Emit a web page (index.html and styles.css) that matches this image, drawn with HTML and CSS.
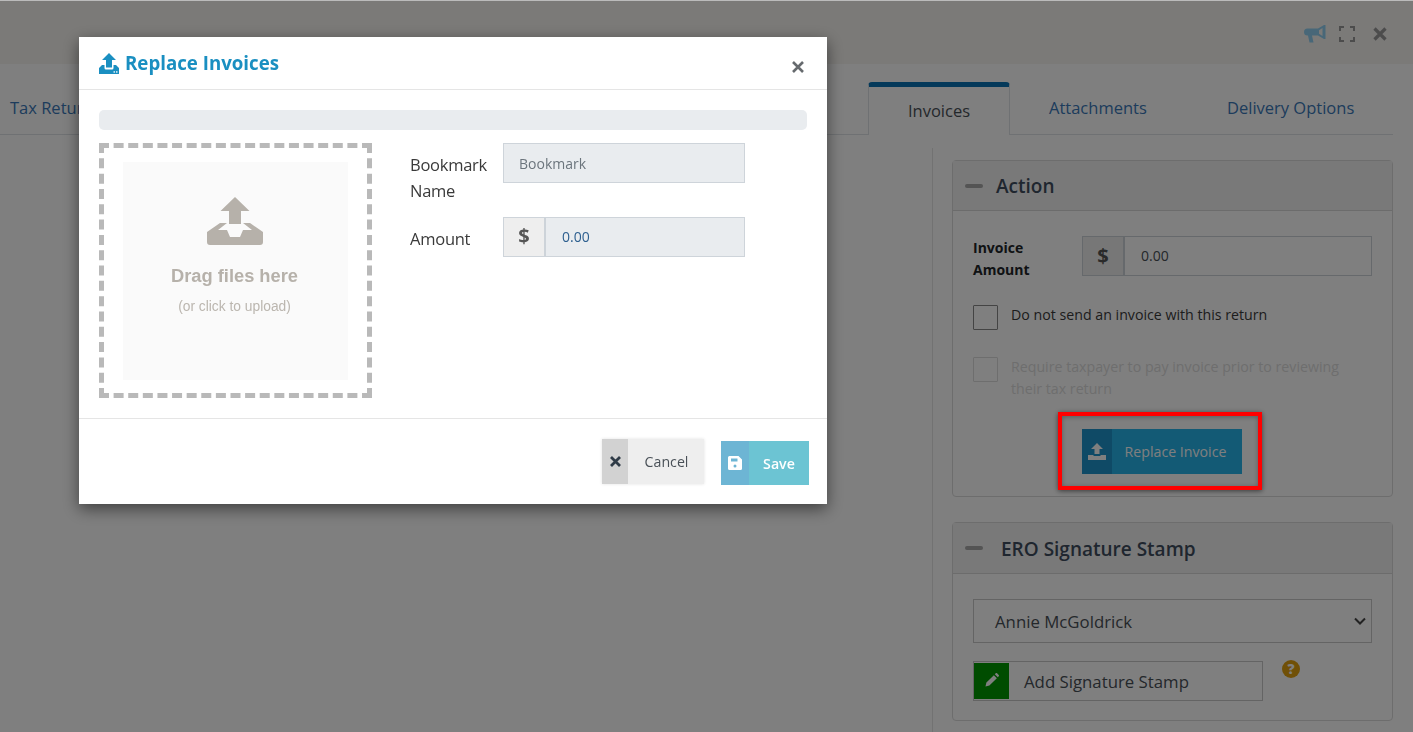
FILE: index.html
```html
<!DOCTYPE html>
<html lang="en">
<head>
<meta charset="utf-8">
<title>Replace Invoices</title>
<link rel="stylesheet" href="styles.css">
</head>
<body>
<div class="page">
  <header class="topbar">
    <svg class="tb-icon" width="22" height="18" viewBox="0 0 22 18"><path fill="#90cff0" d="M20 0h1.500v14H20L14 10.500H8L9.500 17.500H5.500L4 10.500H3.500A3.500 3.500 0 0 1 3.500 3.500H14zM18.500 3L15 5.200v3.600L18.500 11z"/></svg>
    <svg class="tb-icon tb-expand" width="16" height="16" viewBox="0 0 16 16"><path fill="none" stroke="#999" stroke-width="2" d="M1 5V1h4M11 1h4v4M15 11v4h-4M5 15H1v-4"/></svg>
    <svg class="tb-icon" width="14" height="14" viewBox="0 0 14 14"><path stroke="#999" stroke-width="3.200" d="M1.500 1.500l11 11M12.500 1.500l-11 11"/></svg>
  </header>
  <nav class="tabs">
    <a class="tab tab-first">Tax Returns</a>
    <a class="tab tab-active">Invoices</a>
    <a class="tab tab-attach">Attachments</a>
    <a class="tab tab-delivery">Delivery Options</a>
  </nav>
  <div class="content">
    <aside class="side">
      <section class="panel panel-action">
        <div class="panel-head"><span class="minus"></span><span class="panel-title">Action</span></div>
        <div class="panel-body">
          <div class="amount-row">
            <label class="amount-label">Invoice Amount</label>
            <div class="inp-group side-group"><span class="addon">$</span><span class="inp-val">0.00</span></div>
          </div>
          <div class="check-row"><span class="box"></span><span class="check-text">Do not send an invoice with this return</span></div>
          <div class="check-row check-off"><span class="box"></span><span class="check-text check-long">Require taxpayer to pay invoice prior to reviewing their tax return</span></div>
          <div class="replace-wrap">
            <a class="replace-btn">
              <span class="replace-ico"><svg width="18" height="17" viewBox="0 0 18 17"><path fill="#fff" d="M9 0l6 6h-3.500v5h-5V6H3zM0 12h5.500v1h7v-1H18v5H0z"/></svg></span>
              <span class="replace-txt">Replace Invoice</span>
            </a>
          </div>
        </div>
      </section>
      <section class="panel panel-ero">
        <div class="panel-head ero-head"><span class="minus"></span><span class="panel-title ero-title">ERO Signature Stamp</span></div>
        <div class="panel-body">
          <div class="select-box"><span>Annie McGoldrick</span><svg width="12" height="8" viewBox="0 0 12 8"><path fill="none" stroke="#444" stroke-width="2" d="M1 1.500l5 5 5-5"/></svg></div>
          <div class="stamp-row">
            <a class="stamp-btn">
              <span class="stamp-ico"><svg width="14" height="14" viewBox="0 0 15 15"><path fill="#fff" d="M0.500 14.500l1-4.200L9.500 2.300l3.200 3.200-8 8zM10.500 1.300l1-1a1 1 0 0 1 1.400 0l1.800 1.800a1 1 0 0 1 0 1.400l-1 1z"/></svg></span>
              <span class="stamp-txt">Add Signature Stamp</span>
            </a>
            <span class="help">?</span>
          </div>
        </div>
      </section>
    </aside>
  </div>
</div>

<div class="backdrop"></div>
<div class="red-box"></div>

<div class="modal">
  <div class="modal-head">
    <svg width="20" height="21" viewBox="0 0 20 21"><path fill="#1a8fc1" d="M11 0l7 7h-4v7.500H8V7H4z" transform="translate(-1 0)"/><path fill="#1a8fc1" d="M0 21V15L3 12H5.500V15Q5.500 16.500 7 16.500H13Q14.500 16.500 14.500 15V12H17L20 15V21Z"/><rect x="14.500" y="18.300" width="1.500" height="1.300" fill="#fff"/><rect x="17" y="18.300" width="1.500" height="1.300" fill="#fff"/></svg>
    <h2 class="modal-title">Replace Invoices</h2>
    <svg class="modal-close" width="12" height="12" viewBox="0 0 12 12"><path stroke="#666a6e" stroke-width="2.600" d="M1 1l10 10M11 1L1 11"/></svg>
  </div>
  <div class="modal-body">
    <div class="progress"></div>
    <div class="form-area">
      <div class="drop">
        <div class="drop-inner">
          <svg class="drop-ico" width="56" height="48" viewBox="0 0 56 48"><path fill="#b6b1aa" d="M28 0L42.500 14H34V27H22V14H13.500ZM13 26H20L11 33H20L23 40H33L36 33H45L36 26H43L56 35V45A3 3 0 0 1 53 48H3A3 3 0 0 1 0 45V35Z"/></svg>
          <div class="drop-main">Drag files here</div>
          <div class="drop-sub">(or click to upload)</div>
        </div>
      </div>
      <div class="fields">
        <div class="field">
          <label class="field-label">Bookmark Name</label>
          <div class="fake-input placeholder">Bookmark</div>
        </div>
        <div class="field field-amount">
          <label class="field-label">Amount</label>
          <div class="inp-group modal-group"><span class="addon addon-modal">$</span><span class="inp-val modal-val">0.00</span></div>
        </div>
      </div>
    </div>
  </div>
  <div class="modal-foot">
    <a class="btn btn-cancel"><span class="btn-ico cancel-ico"><svg width="11" height="11" viewBox="0 0 11 11"><path stroke="#2f3b47" stroke-width="2.800" d="M1 1l9 9M10 1l-9 9"/></svg></span><span class="btn-txt">Cancel</span></a>
    <a class="btn btn-save"><span class="btn-ico save-ico"><svg width="14" height="14" viewBox="0 0 14 14"><path fill="#fff" fill-rule="evenodd" d="M1.500 0H10.500L14 3.500V12.500A1.500 1.500 0 0 1 12.500 14H1.500A1.500 1.500 0 0 1 0 12.500V1.500A1.500 1.500 0 0 1 1.500 0zM3 2.500V5.500H9.500V2.500zM7 8.500a1.500 1.500 0 1 0 0 3 1.500 1.500 0 0 0 0-3z"/></svg></span><span class="btn-txt">Save</span></a>
  </div>
</div>
</body>
</html>
```
FILE: styles.css
```css
* { box-sizing: border-box; }
html, body { margin: 0; height: 100%; overflow: hidden; }
body { font-family: "Open Sans", "Noto Sans", sans-serif; color: #212529; background: #fff; }
.page { height: 732px; overflow: hidden; }
.topbar { height: 64px; background: #f6f4f0; display: flex; align-items: center; justify-content: flex-end; gap: 13px; padding-right: 26px; padding-top: 2px; border-top: 1px solid #bbb; }
.tb-icon { display: block; }
.tb-expand { margin-right: 5px; }
.tabs { height: 71px; margin-right: 20px; border-bottom: 1px solid #dee2e6; position: relative; font-size: 16.500px; }
.tab { color: #3a78b8; display: block; }
.tab-first { position: absolute; left: 10px; top: 32px; }
.tab-active { position: absolute; left: 868px; top: 18px; width: 142px; height: 53px; background: #fff; border: 1px solid #dee2e6; border-top: 5px solid #0973b4; border-bottom: 0; border-radius: 4px 4px 0 0; color: #495057; text-align: center; padding-top: 12px; }
.tab-attach { position: absolute; left: 1049px; top: 32px; }
.tab-delivery { position: absolute; left: 1227px; top: 32px; }
.content { display: flex; justify-content: flex-end; padding-top: 13px; }
.side { width: 481px; border-left: 1px solid #e4e4e4; padding: 12px 20px 0 19px; height: 600px; }
.panel { border: 1px solid #dadada; border-radius: 4px; background: #fff; }
.panel-action { height: 337px; }
.panel-ero { margin-top: 25px; height: 199px; }
.panel-head { height: 50px; background: #f2f2f2; border-bottom: 1px solid #d8d8d8; display: flex; align-items: center; padding-left: 12px; }
.ero-head { height: 51px; }
.minus { width: 18px; height: 4px; border-radius: 2px; background: #a8a8a8; display: block; margin-right: 13px; }
.panel-title { font-size: 19px; font-weight: 600; color: #3f4d5e; }
.ero-title { margin: 1px 0 0 5px; }
.panel-body { padding: 25px 20px 0; }
.amount-row { display: flex; align-items: flex-start; }
.amount-label { width: 109px; font-size: 14px; font-weight: 700; line-height: 22px; padding-top: 1px; }
.inp-group { display: flex; border: 1px solid #cdd3d9; height: 40px; }
.side-group { width: 290px; background: #fff; }
.addon { width: 42px; background: #eee; border-right: 2px solid #cdd3d9; display: flex; align-items: center; justify-content: center; font-weight: 700; font-size: 20px; color: #555; flex: none; padding-bottom: 2px; }
.inp-val { font-size: 14px; line-height: 38px; padding-left: 16px; color: #495057; }
.check-row { display: flex; font-size: 14.200px; line-height: 22px; gap: 13px; color: #3a3a3a; }
.amount-row + .check-row { margin-top: 24px; }
.check-off { margin-top: 27px; color: #dcdcdc; }
.check-text { margin-top: -1px; }
.check-long { max-width: 340px; }
.box { width: 25px; height: 25px; border: 1px solid #888; flex: none; border-radius: 1px; }
.check-off .box { border-color: #dcdcdc; }
.replace-wrap { display: flex; justify-content: center; padding: 29px 22px 0 0; }
.replace-btn { width: 160px; height: 45px; display: flex; background: #26b4ea; color: #fff; font-size: 14.200px; }
.replace-ico { width: 30px; background: #1e94cc; display: flex; align-items: center; justify-content: center; }
.replace-txt { flex: 1; text-align: center; line-height: 45px; padding-right: 2px; }
.select-box { height: 44px; border: 1px solid #c8c8c8; display: flex; align-items: center; justify-content: space-between; padding: 0 5px 0 21px; font-size: 16.800px; color: #495057; }
.stamp-row { display: flex; margin-top: 18px; }
.stamp-btn { width: 290px; height: 40px; border: 1px solid #c8c8c8; display: flex; font-size: 16.800px; color: #495057; }
.stamp-ico { width: 35px; margin: 1px 0; background: #009900; display: flex; align-items: center; justify-content: center; padding-bottom: 3px; }
.stamp-txt { margin-left: 15px; line-height: 40px; }
.help { width: 18px; height: 18px; border-radius: 50%; background: #e1a10f; color: #fff; margin: -1px 0 0 19px; font-size: 14px; font-weight: 800; text-align: center; line-height: 18px; }

.backdrop { position: fixed; inset: 1px 0 0; background: rgba(0,0,0,.5); z-index: 10; }
.red-box { position: fixed; left: 1058px; top: 412px; width: 204px; height: 78px; border: 4px solid #ff0000; box-shadow: 0 1px 5px rgba(0,0,0,.55), inset 0 1px 5px rgba(0,0,0,.3); z-index: 20; }

.modal { position: fixed; left: 79px; top: 37px; width: 748px; height: 467px; background: #fff; z-index: 30; box-shadow: 0 5px 15px rgba(0,0,0,.5); display: flex; flex-direction: column; }
.modal-head { height: 53px; border-bottom: 1px solid #e5e5e5; display: flex; align-items: center; padding: 0 23px 0 20px; gap: 6px; flex: none; }
.modal-title { margin: 0 0 2px; font-size: 18.700px; font-weight: 700; color: #1a8fc1; flex: 1; }
.modal-close { margin-top: 8px; }
.modal-body { padding: 20px 20px 0; height: 329px; flex: none; border-bottom: 1px solid #e5e5e5; }
.progress { height: 20px; background: #e9ecef; border-radius: 5px; }
.form-area { display: flex; margin-top: 13px; }
.drop { width: 273px; height: 255px; flex: none; border: 5px dashed #b9b9b9; padding: 14px 19px 13px 19px; }
.drop-inner { background: #fafafa; height: 100%; display: flex; flex-direction: column; align-items: center; padding-right: 2px; font-family: "Liberation Sans", Arial, sans-serif; }
.drop-ico { margin-top: 35px; }
.drop-main { font-size: 18.300px; font-weight: 700; color: #b6b1aa; margin-top: 21px; line-height: 20px; }
.drop-sub { font-size: 13.800px; color: #bbb6af; margin-top: 14px; line-height: 14px; }
.fields { margin-left: 38px; width: 335px; }
.field { display: flex; align-items: flex-start; }
.field-amount { margin-top: 13px; }
.field-label { width: 93px; flex: none; font-size: 16.500px; line-height: 26px; color: #3a3a3a; letter-spacing: -0.25px; padding-top: 9px; }
.fake-input { width: 242px; height: 40px; background: #e9ecef; border: 1px solid #ced4da; font-size: 14px; line-height: 40px; padding-left: 15px; }
.placeholder { color: #6c757d; }
.modal-group { width: 242px; background: #e9ecef; border-color: #ced4da; }
.addon-modal { background: #eee; padding-bottom: 4px; }
.modal-val { color: #2d5f8f; }
.modal-foot { flex: 1; display: flex; justify-content: flex-end; align-items: flex-start; padding: 20px 18px 0 0; gap: 17px; }
.btn { display: flex; font-size: 14.200px; height: 45px; }
.btn-ico { display: flex; align-items: center; justify-content: center; flex: none; }
.btn-txt { flex: 1; text-align: center; line-height: 46px; }
.btn-cancel { width: 102px; background: #eee; color: #495057; box-shadow: 0 0 3px rgba(0,0,0,.12); }
.cancel-ico { width: 26px; background: #d2d2d2; }
.btn-cancel .btn-txt { padding-left: 1px; }
.btn-save { width: 88px; height: 44px; background: #6cc4d3; color: #fff; font-weight: 600; margin-top: 2px; }
.save-ico { width: 28px; background: #6db5d4; }
```
